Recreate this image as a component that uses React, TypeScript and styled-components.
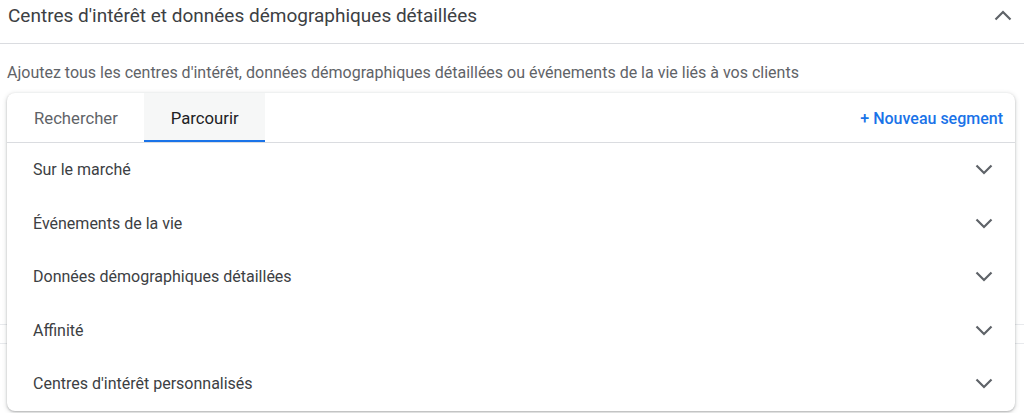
import styled, { createGlobalStyle } from 'styled-components'

const GlobalStyle = createGlobalStyle`
  html, body {
    margin: 0;
    padding: 0;
    background: #ffffff;
    font-family: Roboto, 'Liberation Sans', Arial, sans-serif;
  }
`

const Page = styled.div`
  position: relative;
  width: 1024px;
  height: 413px;
  overflow: hidden;
  background: #fff;
`

const Header = styled.div`
  display: flex;
  align-items: center;
  justify-content: space-between;
  height: 31px;
  padding: 0 12px 12px 8px;
  border-bottom: 1px solid #dadce0;
`

const Title = styled.h2`
  margin: 0;
  font-size: 19px;
  font-weight: 400;
  color: #3c4043;
`

const Description = styled.p`
  margin: 19px 0 0 7px;
  font-size: 16px;
  line-height: 20px;
  color: #5f6368;
`

const Underlay = styled.div`
  display: flex;
  flex-direction: column;
`

const UnderRow = styled.div<{ height: number }>`
  height: ${(p) => p.height}px;
  border-bottom: 1px solid #e8eaed;
`

const Card = styled.div`
  position: absolute;
  top: 93px;
  left: 7px;
  width: 1008px;
  background: #fff;
  border-radius: 8px;
  box-shadow: 0 1px 2px rgba(60, 64, 67, 0.3), 0 1px 4px 1px rgba(60, 64, 67, 0.15);
  overflow: hidden;
`

const TabBar = styled.div`
  display: flex;
  align-items: stretch;
  height: 49px;
  border-bottom: 1px solid #dadce0;
`

const Tab = styled.div<{ active?: boolean }>`
  display: flex;
  align-items: center;
  padding: 1px 26px 0 27px;
  font-size: 16.7px;
  color: ${(p) => (p.active ? '#202124' : '#5f6368')};
  background: ${(p) => (p.active ? '#f6f7f7' : 'transparent')};
  box-shadow: ${(p) => (p.active ? 'inset 0 -2px 0 #1a73e8' : 'none')};
`

const NewSegment = styled.div`
  margin-left: auto;
  display: flex;
  align-items: center;
  padding: 1px 12px 0 0;
  font-size: 16px;
  font-weight: 500;
  color: #1a73e8;
`

const Row = styled.div`
  display: flex;
  align-items: center;
  justify-content: space-between;
  height: 53.5px;
  padding: 0 22px 0 26px;
  font-size: 16px;
  color: #3c4043;
`

const Chevron = ({ up }: { up?: boolean }) => (
  <svg width="18" height="11" viewBox="0 0 18 11">
    <polyline
      points={up ? '1.5,9.5 9,2 16.5,9.5' : '1.5,1.5 9,9 16.5,1.5'}
      fill="none"
      stroke="#5f6368"
      strokeWidth="2.2"
    />
  </svg>
)

const categories = [
  'Sur le marché',
  'Événements de la vie',
  'Données démographiques détaillées',
  'Affinité',
  "Centres d'intérêt personnalisés",
]

const App = () => {
  return (
    <Page>
      <GlobalStyle />
      <Header>
        <Title>Centres d'intérêt et données démographiques détaillées</Title>
        <Chevron up />
      </Header>
      <Description>
        Ajoutez tous les centres d'intérêt, données démographiques détaillées ou événements de la vie liés à vos clients
      </Description>
      <Underlay>
        <UnderRow height={241} />
        <UnderRow height={18} />
      </Underlay>
      <Card>
        <TabBar>
          <Tab>Rechercher</Tab>
          <Tab active>Parcourir</Tab>
          <NewSegment>+ Nouveau segment</NewSegment>
        </TabBar>
        {categories.map((c) => (
          <Row key={c}>
            <span>{c}</span>
            <Chevron />
          </Row>
        ))}
      </Card>
    </Page>
  )
}

export default App
